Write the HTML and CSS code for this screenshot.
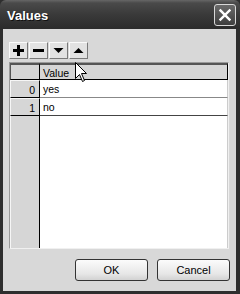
FILE: index.html
```html
<!DOCTYPE html>
<html>
<head>
<meta charset="utf-8">
<link rel="stylesheet" href="styles.css">
</head>
<body>
<div class="window">
  <div class="titlebar">
    <span class="title">Values</span>
    <span class="close">
      <svg width="22" height="22" viewBox="0 0 22 22">
        <path d="M6 6 L16 16 M16 6 L6 16" stroke="#fff" stroke-width="2.6" stroke-linecap="square"/>
      </svg>
    </span>
  </div>
  <div class="content">
    <div class="toolbar">
      <span class="tbtn"><svg width="11" height="11" viewBox="0 0 11 11"><path d="M0 4h11v3H0z M4 0h3v11H4z" fill="#000"/></svg></span>
      <span class="tbtn"><svg width="11" height="11" viewBox="0 0 11 11"><path d="M0 4h11v3H0z" fill="#000"/></svg></span>
      <span class="tbtn"><svg width="11" height="11" viewBox="0 0 11 11"><path d="M0.5 3h10L5.5 8z" fill="#000"/></svg></span>
      <span class="tbtn"><svg width="11" height="11" viewBox="0 0 11 11"><path d="M0.5 8h10L5.5 3z" fill="#000"/></svg></span>
    </div>
    <div class="grid">
      <div class="row head">
        <div class="rh"></div>
        <div class="cell">Value</div>
      </div>
      <div class="row">
        <div class="rh">0</div>
        <div class="cell">yes</div>
      </div>
      <div class="row last">
        <div class="rh">1</div>
        <div class="cell">no</div>
      </div>
      <div class="row fill">
        <div class="rh"></div>
        <div class="cell"></div>
      </div>
    </div>
    <div class="actions">
      <span class="btn">OK</span>
      <span class="btn">Cancel</span>
    </div>
  </div>
  <svg class="cursor" width="13" height="21" viewBox="0 0 13 21">
    <path d="M0.5 0.5 L0.5 16.5 L4.5 12.5 L7.5 19.5 L9.5 18.5 L6.5 11.5 L11.5 11.5 Z" fill="#fff" stroke="#000" stroke-width="1"/>
  </svg>
</div>
</body>
</html>
```
FILE: styles.css
```css
html, body {
  margin: 0;
  padding: 0;
  background: #d9d9d9;
}
.window {
  position: relative;
  width: 240px;
  height: 294px;
  box-sizing: border-box;
  background: #2e2e2e;
  display: flex;
  flex-direction: column;
  font-family: "Liberation Sans", Arial, sans-serif;
  overflow: hidden;
}
.titlebar {
  height: 29px;
  flex: none;
  display: flex;
  align-items: center;
  justify-content: space-between;
  padding: 0 4px 0 7px;
  background: linear-gradient(#666 0px, #4a4a4a 3px, #3a3a3a 14px, #2c2c2c 28px);
  border-radius: 6px 6px 0 0;
}
.title {
  color: #fff;
  font-weight: bold;
  font-size: 13px;
  margin-top: 1px;
  text-shadow: 1px 1px 0 #111;
}
.close {
  width: 20px;
  height: 20px;
  border: 1px solid #d8d8d8;
  border-radius: 3px;
  background: linear-gradient(#6a6a6a, #3e3e3e);
  display: flex;
  align-items: center;
  justify-content: center;
  overflow: hidden;
}
.content {
  flex: 1;
  margin: 0 4px 3px 3px;
  background: #d8d8d8;
  padding: 13px 6px 0 6px;
  display: flex;
  flex-direction: column;
}
.toolbar {
  display: flex;
  gap: 1px;
  height: 17px;
}
.tbtn {
  width: 17px;
  height: 15px;
  border: 1px solid;
  border-color: #fafafa #7a7a7a #7a7a7a #fafafa;
  background: #e2e2e2;
  display: flex;
  align-items: center;
  justify-content: center;
}
.grid {
  margin-top: 3px;
  width: 220px;
  height: 187px;
  box-sizing: border-box;
  border: 1px solid;
  border-color: #9a9a9a #f0f0f0 #f0f0f0 #9a9a9a;
  display: flex;
  flex-direction: column;
  font-size: 10.5px;
  background: #fff;
}
.row {
  display: flex;
  height: 18px;
  flex: none;
}
.rh {
  width: 30px;
  box-sizing: border-box;
  background: #d6d6d6;
  border-top: 1px solid #f6f6f6;
  border-left: 1px solid #f6f6f6;
  border-bottom: 1px solid #000;
  border-right: 1px solid #000;
  text-align: right;
  padding: 3px 4px 0 0;
  color: #000;
}
.cell {
  flex: 1;
  box-sizing: border-box;
  padding: 3px 0 0 3px;
  border-bottom: 1px solid #888;
  border-right: 1px solid #ccc;
  color: #000;
}
.row.head {
  height: 17px;
}
.row.head .rh {
  border-top: 2px solid #555;
  border-left: 1px solid #555;
}
.row.head .cell {
  background: #d6d6d6;
  border-top: 2px solid #555;
  border-bottom: 1px solid #000;
  border-right: 1px solid #000;
  padding-top: 2px;
}
.row.last .cell {
  border-bottom: 1px solid #444;
}
.row.fill {
  flex: 1;
  height: auto;
}
.row.fill .rh {
  border-bottom: 0;
  border-top: 0;
}
.row.fill .cell {
  border-bottom: 0;
}
.actions {
  display: flex;
  justify-content: flex-end;
  gap: 9px;
  margin-top: 10px;
}
.btn {
  width: 71px;
  height: 20px;
  border: 1px solid #333;
  border-radius: 3px;
  background: linear-gradient(#fbfbfb, #e6e6e6 70%, #d2d2d2);
  font-size: 11px;
  display: flex;
  align-items: center;
  justify-content: center;
  color: #000;
}
.cursor {
  position: absolute;
  left: 75px;
  top: 62px;
}
```
